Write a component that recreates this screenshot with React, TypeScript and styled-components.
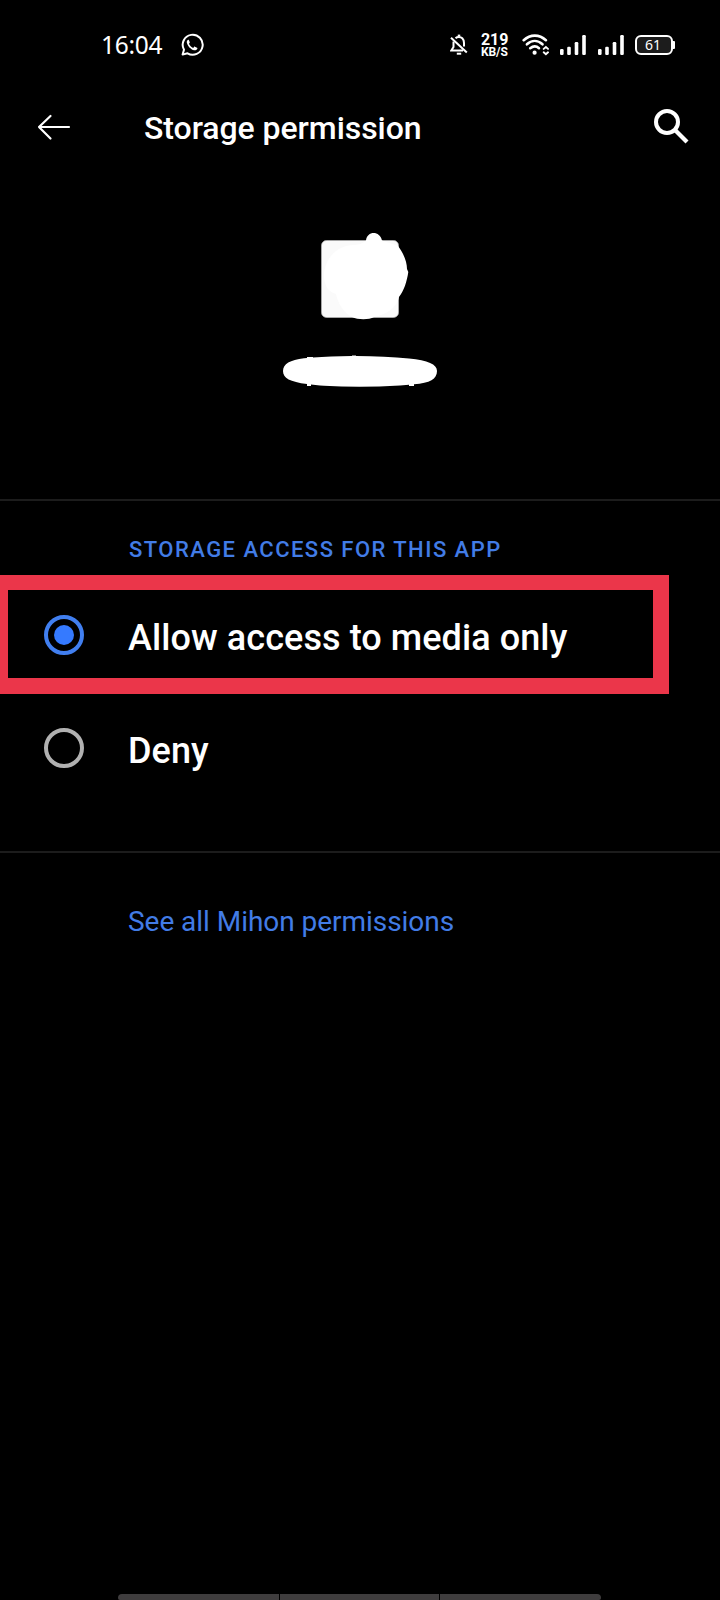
import React from "react";
import styled, { createGlobalStyle } from "styled-components";

const GlobalStyle = createGlobalStyle`
  * { box-sizing: border-box; }
  html, body { margin: 0; background: #000; }
`;

const Screen = styled.div`
  width: 720px;
  height: 1600px;
  display: flex;
  flex-direction: column;
  overflow: hidden;
  background: #000;
  color: #fff;
  font-family: Roboto, sans-serif;
`;

const StatusBar = styled.header`
  height: 90px;
  flex: none;
  display: flex;
  align-items: center;
  padding: 0 45px 0 101px;
`;

const Clock = styled.span`
  width: 79px;
  font: 400 24.5px/30px "Noto Sans", sans-serif;
  letter-spacing: -0.3px;
  white-space: nowrap;
`;

const StatusIcons = styled.div`
  display: flex;
  align-items: center;
  margin-left: auto;
`;

const Speed = styled.div`
  width: 28px;
  margin: 0 13px;
  display: flex;
  flex-direction: column;
  font-family: Roboto, sans-serif;
  white-space: nowrap;
`;

const SpeedValue = styled.span`
  font-size: 16px;
  line-height: 13px;
  font-weight: 700;
  letter-spacing: -0.1px;
`;

const SpeedUnit = styled.span`
  font-size: 12px;
  line-height: 12px;
  font-weight: 700;
  letter-spacing: -0.1px;
`;

const Signal = styled.svg<{ $gap: number }>`
  margin-left: ${(p) => p.$gap}px;
`;

const Battery = styled.div`
  width: 38px;
  height: 20px;
  margin-left: 11px;
  border: 2px solid #fff;
  border-radius: 6px;
  background: #1c1c1c;
  font: 400 14px/16px "Noto Sans", sans-serif;
  text-align: center;
  padding-right: 2px;
`;

const BatteryTip = styled.div`
  width: 2px;
  height: 8px;
  border-radius: 0 1px 1px 0;
  background: #fff;
`;

const AppBar = styled.div`
  height: 76px;
  flex: none;
  display: flex;
  align-items: center;
  padding: 0 31px 0 37px;
`;

const Title = styled.h1`
  flex: 1;
  margin: 0 0 0 71px;
  font-size: 32px;
  line-height: 40px;
  font-weight: 500;
  letter-spacing: -0.06px;
`;

const AppIdentity = styled.section`
  height: 333px;
  flex: none;
  display: flex;
  justify-content: center;
  padding-top: 54px;
`;

const Divider = styled.hr`
  width: 100%;
  height: 2px;
  flex: none;
  margin: 0;
  border: 0;
  background: #1c1c1c;
`;

const Section = styled.section`
  height: 350px;
  flex: none;
`;

const SectionLabel = styled.h2`
  margin: 0;
  height: 74px;
  padding: 35px 0 0 129px;
  font-size: 22px;
  line-height: 28px;
  font-weight: 500;
  letter-spacing: 1.46px;
  color: #427ce6;
  white-space: nowrap;
`;

const Option = styled.label<{ $marked?: boolean }>`
  display: flex;
  align-items: center;
  width: 669px;
  height: ${(p) => (p.$marked ? 119 : 108)}px;
  padding-top: ${(p) => (p.$marked ? 2 : 0)}px;
  padding-left: ${(p) => (p.$marked ? 36 : 44)}px;
  border-style: solid;
  border-color: ${(p) => (p.$marked ? "#eb364a" : "transparent")};
  border-width: ${(p) => (p.$marked ? "15px 16px 16px 8px" : "0")};
`;

const Radio = styled.span<{ $checked?: boolean }>`
  width: 40px;
  height: 40px;
  flex: none;
  display: grid;
  place-items: center;
  border: 4px solid ${(p) => (p.$checked ? "#417ff0" : "#b1b1b1")};
  border-radius: 50%;

  &::after {
    content: "";
    width: 20px;
    height: 20px;
    border-radius: 50%;
    background: ${(p) => (p.$checked ? "#357aff" : "transparent")};
  }
`;

const OptionText = styled.span`
  margin-left: 44px;
  padding-top: 5px;
  font-size: 36px;
  line-height: 42px;
  font-weight: 500;
  letter-spacing: 0.08px;
  white-space: nowrap;
`;

const Link = styled.a`
  padding: 51px 0 0 128px;
  font-size: 28px;
  line-height: 36px;
  letter-spacing: -0.04px;
  color: #427ce6;
`;

const NavBar = styled.nav`
  display: flex;
  gap: 1px;
  height: 6px;
  margin: auto 119px 0 118px;
  border-radius: 4px 4px 2px 2px;
  overflow: hidden;
`;

const NavSegment = styled.div<{ $width: number }>`
  flex: none;
  width: ${(p) => p.$width}px;
  background: #3f3d3e;
`;

const WhatsAppIcon = () => (
  <svg width="24" height="24" viewBox="0 0 24 24" fill="none">
    <path d="M2.6 21.6 4 16.7A10 10 0 1 1 7.5 20.3Z" stroke="#fff" strokeWidth="2" strokeLinejoin="round" />
    <path d="M8.2 6.7c-1 .5-1.6 1.6-1.4 2.7.8 3.600 3.700 6.800 7.400 7.900 1.300.3 2.900-.5 3.200-1.700.1-.5 0-.7-.4-.9l-2.100-1c-.4-.2-.7-.1-.9.2l-.8 1c-1.900-.8-3.400-2.200-4.300-4.100l.7-.9c.2-.3.2-.5.1-.8l-.9-2.100c-.1-.3-.3-.4-.6-.3Z" fill="#fff" />
  </svg>
);

const BellOffIcon = () => (
  <svg width="18" height="22" viewBox="0 0 18 22" fill="none" stroke="#fff" strokeWidth="2">
    <path d="M5.500 4.200C7.300 2.600 10.500 2.600 12.300 4.300 13.600 5.600 14 7 14 9v3.500M3.500 7.500V13L1.300 16.600H13" />
    <path d="M1 3.800 16.800 18.500" />
    <path d="M9 .6v2" strokeWidth="2.500" />
    <path d="M6.800 19.700h4.400" strokeWidth="2" />
  </svg>
);

const WifiIcon = () => (
  <svg width="27" height="22" viewBox="0 0 27 22" fill="none" stroke="#fff" strokeLinecap="round">
    <path d="M1.700 6.200C8.400.1 17.200.1 23.900 6.200" strokeWidth="2.600" />
    <path d="M4.900 10.300C9.700 5.900 15.700 5.900 20.500 10.300" strokeWidth="2.600" />
    <path d="M8.200 14.200C11.200 11.800 14.300 11.800 17 14.200" strokeWidth="2.600" />
    <circle cx="12.600" cy="18.700" r="2.100" fill="#fff" stroke="none" />
    <path d="M21.700 14.900 23.900 13 26 14.900M21.700 18.300 23.900 20.300 26 18.300" strokeWidth="1.900" />
  </svg>
);

const SignalBars = ({ gap }: { gap: number }) => (
  <Signal $gap={gap} width="26" height="20" viewBox="0 0 26 20" fill="#fff">
    <rect x="0" y="14" width="3.600" height="6" rx="1.200" />
    <rect x="7.200" y="11.700" width="3.600" height="8.300" rx="1.200" />
    <rect x="14.700" y="7" width="3.600" height="13" rx="1.200" />
    <rect x="22.200" y="0" width="3.600" height="20" rx="1.200" />
  </Signal>
);

const BackIcon = () => (
  <svg width="36" height="28" viewBox="0 0 36 28" fill="none" stroke="#fff" strokeWidth="2.200" strokeLinecap="round" strokeLinejoin="round">
    <path d="M32 13H2M13.500 2 2 13 13.500 24.500" />
  </svg>
);

const SearchIcon = () => (
  <svg width="36" height="40" viewBox="0 0 36 40" fill="none" stroke="#fff" strokeWidth="4">
    <circle cx="14" cy="14" r="11" />
    <path d="M21.500 21.500 34 34" strokeWidth="4.200" />
  </svg>
);

const RedactedApp = () => (
  <svg width="180" height="180" viewBox="0 0 180 180">
    <rect x="51.500" y="20.500" width="77" height="77" rx="5" fill="#fafafa" stroke="#b8b8b8" strokeWidth=".7" />
    <path
      fill="#fff"
      d="M54 56C54 39 67 25 84 25Q90 25 94 22L96 20.500C97 10.500 110 10.500 112 20.500L128 26C134 34 137 42 137 49L138.300 52C137 61 134 71 129 77C127 88 115 95 104 97C99 100 88 100 82 97C74 93 68 84 66 74C58 72 54 65 54 56Z"
    />
    <path
      fill="#fff"
      d="M13 151C13 144 20 140 34 138.300L37 138V137H43V137.500Q60 136.300 82 136V135.500H86V136Q115 136 139 138.500C158 140.500 167 144 167 151C167 159 160 163 144 164.300V166H139V164.700L130 165.500Q90 168 54 165.700L50 165.400L41 164.500V166H37V164C20 162 13 158 13 151Z"
    />
  </svg>
);

export default function App() {
  return (
    <Screen>
      <GlobalStyle />
      <StatusBar>
        <Clock>16:04</Clock>
        <WhatsAppIcon />
        <StatusIcons>
          <BellOffIcon />
          <Speed>
            <SpeedValue>219</SpeedValue>
            <SpeedUnit>KB/S</SpeedUnit>
          </Speed>
          <WifiIcon />
          <SignalBars gap={11} />
          <SignalBars gap={12} />
          <Battery>61</Battery>
          <BatteryTip />
        </StatusIcons>
      </StatusBar>
      <AppBar>
        <BackIcon />
        <Title>Storage permission</Title>
        <SearchIcon />
      </AppBar>
      <AppIdentity>
        <RedactedApp />
      </AppIdentity>
      <Divider />
      <Section>
        <SectionLabel>STORAGE ACCESS FOR THIS APP</SectionLabel>
        <Option $marked>
          <Radio $checked />
          <OptionText>Allow access to media only</OptionText>
        </Option>
        <Option>
          <Radio />
          <OptionText>Deny</OptionText>
        </Option>
      </Section>
      <Divider />
      <Link>See all Mihon permissions</Link>
      <NavBar>
        <NavSegment $width={161} />
        <NavSegment $width={159} />
        <NavSegment $width={161} />
      </NavBar>
    </Screen>
  );
}
